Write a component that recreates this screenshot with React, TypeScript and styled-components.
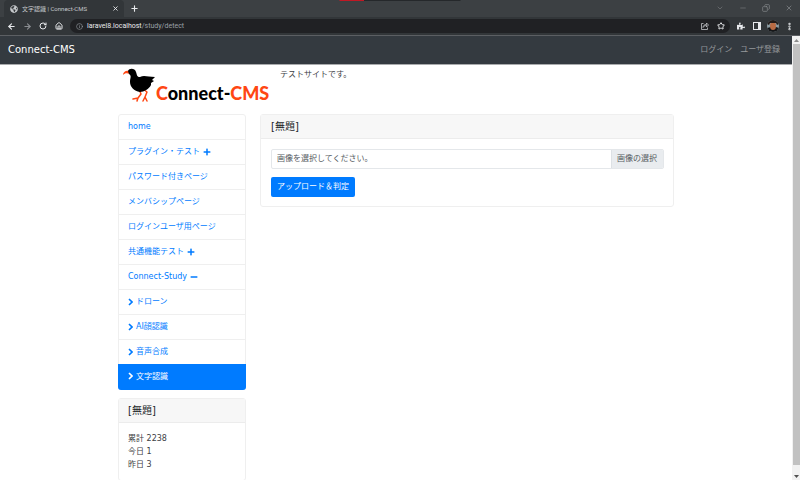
import React, { useState } from "react";
import styled, { createGlobalStyle, css } from "styled-components";
import { FaPlus, FaMinus, FaPuzzlePiece, FaGlobeAmericas } from "react-icons/fa";
import {
  ArrowLeft, ArrowRight, RotateCw, House, Info, Star, EllipsisVertical,
  X, Plus, Minus, ChevronDown, Copy,
} from "lucide-react";

const sans = `"DejaVu Sans", "Noto Sans CJK JP", sans-serif`;
const chrome = `Roboto, "Noto Sans CJK JP", sans-serif`;

const GlobalStyle = createGlobalStyle`
  *, *::before, *::after { box-sizing: border-box; }
  body { margin: 0; background: #fff; color: #3c4044; font: 8px/13px ${sans}; }
  button, input { font: inherit; }
  a { text-decoration: none; color: inherit; }
  svg { display: block; flex: none; }
`;

const Window = styled.div`
  display: flex;
  flex-direction: column;
  height: 100vh;
  overflow: hidden;
`;

const TabStrip = styled.div`
  position: relative;
  display: flex;
  align-items: stretch;
  height: 17px;
  padding-left: 4px;
  background: #3c4043;
  font-family: ${chrome};
`;

const CaptureBar = styled.div`
  position: absolute;
  top: 0;
  left: 50%;
  width: 121px;
  height: 1px;
  transform: translateX(-50%);
  background: linear-gradient(90deg, #c01824 24px, #25282b 24px);
`;

const Tab = styled.div`
  display: flex;
  align-items: center;
  gap: 4px;
  width: 120px;
  padding: 0 5px 0 6px;
  border-radius: 4px 4px 0 0;
  background: #323639;
  color: #c4c7ca;
  font-size: 6px;
`;

const TabTitle = styled.span`
  flex: 1;
  white-space: nowrap;
`;

const IconButton = styled.button<{ $tone?: string }>`
  display: flex;
  align-items: center;
  justify-content: center;
  padding: 0;
  border: 0;
  background: none;
  color: ${(p) => p.$tone ?? "#e8eaed"};
`;

const NewTab = styled(IconButton)`
  margin-left: 6px;
`;

const WindowButtons = styled.div`
  display: flex;
  gap: 15px;
  margin-left: auto;
  padding-right: 7px;
  padding-bottom: 2px;
`;

const Toolbar = styled.div`
  display: flex;
  align-items: center;
  gap: 3px;
  height: 19px;
  padding: 0 3px;
  border-bottom: 1px solid #5c5f63;
  background: #323639;
  font-family: ${chrome};
`;

const ToolGroup = styled.div`
  display: grid;
  grid-auto-columns: 16px;
  grid-auto-flow: column;
  align-items: center;
`;

const AddressBar = styled.div`
  display: flex;
  flex: 1;
  align-items: center;
  gap: 4px;
  height: 14px;
  padding: 0 1px 0 6px;
  border-radius: 7px;
  background: #202124;
  color: #9aa0a6;
  font-size: 7px;
`;

const Address = styled.span`
  flex: 1;
  b { color: #e8eaed; font-weight: 400; }
`;

const Viewport = styled.div`
  display: flex;
  flex: 1;
  min-height: 0;
`;

const Page = styled.div`
  flex: 1;
  min-width: 0;
  overflow: hidden;
`;

const NavBar = styled.nav`
  display: flex;
  align-items: center;
  gap: 8px;
  height: 29px;
  padding: 0 12px 1px 8px;
  border-bottom: 1px solid #a9abad;
  background: #343a40;
  color: #94989b;
`;

const Brand = styled.a`
  margin-right: auto;
  color: #fff;
  font-size: 10px;
`;

const Container = styled.div`
  max-width: 572px;
  margin: 0 auto;
  padding: 0 8px;
`;

const Header = styled.header`
  display: flex;
  gap: 8px;
  height: 49px;
  padding: 3px 0 0 5px;
`;

const Logo = styled.a`
  display: flex;
  width: 149px;
`;

const Wordmark = styled.span`
  align-self: flex-start;
  padding-top: 15px;
  color: #000;
  font: 900 18px/20px Lato, sans-serif;
  white-space: nowrap;
  em { color: #ff4713; font-style: normal; }
`;

const Columns = styled.div`
  display: grid;
  grid-template-columns: 128px minmax(0, 1fr);
  align-items: start;
  gap: 14px;
`;

const Sidebar = styled.aside`
  display: grid;
  gap: 8px;
`;

const Menu = styled.nav`
  border: 1px solid #efefef;
  border-radius: 3px;
`;

const MenuItem = styled.a<{ $active?: boolean }>`
  display: flex;
  align-items: center;
  gap: 3px;
  height: 25px;
  padding: 0 9px 1px;
  border-bottom: 1px solid #efefef;
  color: #007bff;
  white-space: nowrap;
  ${(p) => p.$active && css`
    height: 26px;
    margin: -1px;
    padding: 0 10px 2px;
    border-bottom: 0;
    border-radius: 0 0 3px 3px;
    background: #007bff;
    color: #fff;
  `}
`;

const Card = styled.section`
  border: 1px solid #efefef;
  border-radius: 3px;
`;

const CardTitle = styled.h2<{ $wide?: boolean }>`
  margin: 0;
  padding: 4px ${(p) => (p.$wide ? 10 : 9)}px 3px;
  border-bottom: 1px solid #ececec;
  background: #f7f7f7;
  color: #212529;
  font-size: 10px;
  font-weight: 400;
  line-height: 16px;
`;

const CardBody = styled.div`
  padding: 9px;
`;

const UploadForm = styled.form`
  display: grid;
  justify-items: start;
  gap: 8px;
  padding: 10px 9px 9px 10px;
`;

const FileField = styled.label`
  position: relative;
  display: flex;
  width: 100%;
  height: 20px;
  overflow: hidden;
  border: 1px solid #e4e7ea;
  border-radius: 2px;
  color: #565c62;
  line-height: 17px;
`;

const FileInput = styled.input`
  position: absolute;
  inset: 0;
  width: 100%;
  opacity: 0;
`;

const FileName = styled.span`
  flex: 1;
  padding: 0 5px;
`;

const Browse = styled.span`
  padding: 0 6px 0 5px;
  border-left: 1px solid #dde1e5;
  background: #e9ecef;
`;

const Submit = styled.button`
  height: 20px;
  padding: 0 6px 2px;
  border: 0;
  border-radius: 2px;
  background: #007bff;
  color: #fff;
`;

const ScrollTrack = styled.div`
  display: flex;
  flex-direction: column;
  width: 8px;
  padding-left: 1px;
  background: #f1f1f1;
`;

const ScrollThumb = styled.div`
  flex: 1;
  margin-bottom: 7px;
  background: #c1c1c1;
`;

const ScrollArrow = styled(IconButton)`
  height: 8px;
`;

type Entry = { label: string; icon?: "plus" | "minus"; child?: boolean };

const entries: Entry[] = [
  { label: "home" },
  { label: "プラグイン・テスト", icon: "plus" },
  { label: "パスワード付きページ" },
  { label: "メンバシップページ" },
  { label: "ログインユーザ用ページ" },
  { label: "共通機能テスト", icon: "plus" },
  { label: "Connect-Study", icon: "minus" },
  { label: "ドローン", child: true },
  { label: "AI顔認識", child: true },
  { label: "音声合成", child: true },
  { label: "文字認識", child: true },
];

const Chevron = () => (
  <svg width="5" height="8" viewBox="0 0 5 8" aria-hidden="true">
    <path d="M1 1l3 3-3 3" fill="none" stroke="currentColor" strokeWidth="1.6" />
  </svg>
);

const ShareIcon = () => (
  <svg width="8" height="8" viewBox="0 0 16 16" fill="none" stroke="currentColor" strokeWidth="1.6">
    <path d="M5 3H1v12h12v-4M4 11c0-4 3-6 7-6V2l4 4-4 4V7C8 7 6 8 4 11z" />
  </svg>
);

const Bird = () => (
  <svg width="33" height="36" viewBox="0 0 33 36" aria-hidden="true">
    <g fill="none" stroke="#ff4713" strokeLinecap="round" strokeLinejoin="round" strokeWidth="1.5">
      <path d="M16 21 L18 26 L15 30 L10 31 M15 30 L14 33" />
      <path d="M20 21 L24 24 L22 29 L20 33 M22 29 L24 33" />
    </g>
    <path fill="#ff4713" d="M0 7 C0 4 3 2 6 3 L7 6 C4 5 2 5 0 7Z" />
    <path d="M5 3 C6 0 12 0 13 4 C14 7 14 9 17 9 C21 7 25 9 32 9 L29 12 L31 13 L28 15 L28 17 C26 21 21 24 17 24 C11 23 7 19 7 14 C7 10 9 8 6 6Z" />
  </svg>
);

const Avatar = () => (
  <svg width="12" height="12" viewBox="0 0 12 12">
    <clipPath id="avatar"><circle cx="6" cy="6" r="6" /></clipPath>
    <g clipPath="url(#avatar)">
      <path fill="#8b9ba2" d="M0 0h12v12H0z" />
      <path fill="#161719" d="M0 12V8l4-1h5l3 1v4z" />
      <ellipse cx="6" cy="6" rx="3" ry="4" fill="#b96b43" />
      <path fill="#241c19" d="M0 4V0h12v4L10 5 9 3H3L2 5z" />
    </g>
  </svg>
);

export default function App() {
  const [file, setFile] = useState("画像を選択してください。");
  return (
    <Window>
      <GlobalStyle />
      <TabStrip>
        <CaptureBar />
        <Tab>
          <FaGlobeAmericas size={8} />
          <TabTitle>文字認識 | Connect-CMS</TabTitle>
          <IconButton aria-label="タブを閉じる"><X size={7} strokeWidth={3} /></IconButton>
        </Tab>
        <NewTab aria-label="新しいタブ"><Plus size={9} strokeWidth={3} /></NewTab>
        <WindowButtons>
          <IconButton $tone="#777a7d" aria-label="タブを検索"><ChevronDown size={8} /></IconButton>
          <IconButton $tone="#777a7d" aria-label="最小化"><Minus size={8} /></IconButton>
          <IconButton $tone="#8b8e91" aria-label="元に戻す"><Copy size={8} transform="scale(-1 1)" /></IconButton>
          <IconButton $tone="#8b8e91" aria-label="閉じる"><X size={8} /></IconButton>
        </WindowButtons>
      </TabStrip>
      <Toolbar>
        <ToolGroup>
          <IconButton aria-label="戻る"><ArrowLeft size={9} strokeWidth={3} /></IconButton>
          <IconButton $tone="#8a8d91" aria-label="進む"><ArrowRight size={9} strokeWidth={3} /></IconButton>
          <IconButton aria-label="再読み込み"><RotateCw size={8} strokeWidth={3} /></IconButton>
          <IconButton aria-label="ホーム"><House size={8} strokeWidth={3} /></IconButton>
        </ToolGroup>
        <AddressBar>
          <Info size={7} />
          <Address><b>laravel8.localhost</b>/study/detect</Address>
          <ToolGroup>
            <IconButton $tone="#c4c7ca" aria-label="共有"><ShareIcon /></IconButton>
            <IconButton aria-label="ブックマーク"><Star size={8} strokeWidth={3} /></IconButton>
          </ToolGroup>
        </AddressBar>
        <ToolGroup>
          <IconButton aria-label="拡張機能"><FaPuzzlePiece size={8} /></IconButton>
          <IconButton aria-label="サイドパネル">
            <svg width="8" height="8" viewBox="0 0 8 8"><path fill="currentColor" fillRule="evenodd" d="M0 0h8v8H0zM1 1v6h4V1z" /></svg>
          </IconButton>
          <IconButton aria-label="プロフィール"><Avatar /></IconButton>
          <IconButton aria-label="メニュー"><EllipsisVertical size={9} strokeWidth={4} /></IconButton>
        </ToolGroup>
      </Toolbar>
      <Viewport>
        <Page>
          <NavBar>
            <Brand href="#">Connect-CMS</Brand>
            <a href="#login">ログイン</a>
            <a href="#register">ユーザ登録</a>
          </NavBar>
          <Container>
            <Header>
              <Logo href="#">
                <Bird />
                <Wordmark><em>C</em>onnect-<em>CMS</em></Wordmark>
              </Logo>
              <span>テストサイトです。</span>
            </Header>
            <Columns>
              <Sidebar>
                <Menu>
                  {entries.map((e, i) => (
                    <MenuItem key={e.label} href="#" $active={i === entries.length - 1}>
                      {e.child && <Chevron />}
                      {e.label}
                      {e.icon === "plus" && <FaPlus size={8} />}
                      {e.icon === "minus" && <FaMinus size={8} />}
                    </MenuItem>
                  ))}
                </Menu>
                <Card>
                  <CardTitle>[無題]</CardTitle>
                  <CardBody>
                    <div>累計 2238</div>
                    <div>今日 1</div>
                    <div>昨日 3</div>
                  </CardBody>
                </Card>
              </Sidebar>
              <Card>
                <CardTitle $wide>[無題]</CardTitle>
                <UploadForm onSubmit={(e) => e.preventDefault()}>
                  <FileField>
                    <FileInput type="file" accept="image/*" onChange={(e) => setFile(e.target.files?.[0]?.name ?? file)} />
                    <FileName>{file}</FileName>
                    <Browse>画像の選択</Browse>
                  </FileField>
                  <Submit type="submit">アップロード＆判定</Submit>
                </UploadForm>
              </Card>
            </Columns>
          </Container>
        </Page>
        <ScrollTrack>
          <ScrollArrow aria-label="上へ"><svg width="5" height="3" viewBox="0 0 5 3"><path fill="#8b8b8b" d="M0 3 2.5 0 5 3z" /></svg></ScrollArrow>
          <ScrollThumb />
          <ScrollArrow aria-label="下へ"><svg width="5" height="3" viewBox="0 0 5 3"><path fill="#505050" d="M0 0h5L2.5 3z" /></svg></ScrollArrow>
        </ScrollTrack>
      </Viewport>
    </Window>
  );
}
